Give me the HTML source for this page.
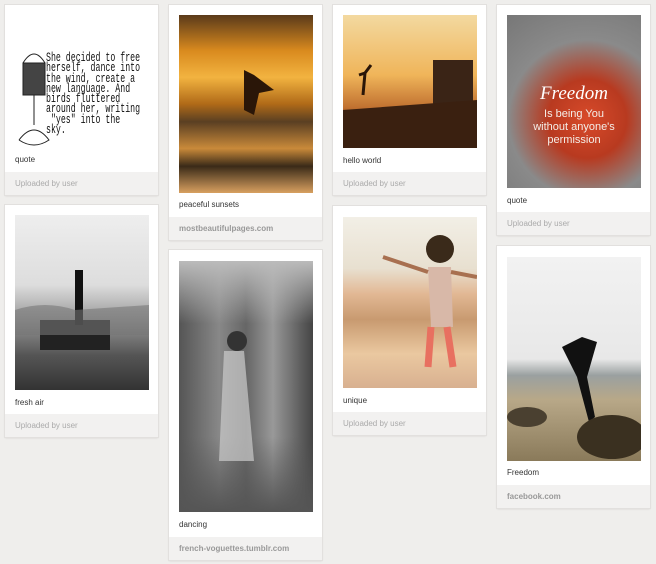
<!DOCTYPE html>
<html><head><meta charset="utf-8"><style>
body{margin:0;width:656px;height:564px;background:#efeeec;font-family:"Liberation Sans",sans-serif;position:relative;overflow:hidden}
.c{position:absolute;width:153px;background:#fff;box-shadow:0 0 0 1px #e2e0de,0 1px 2px rgba(0,0,0,.12)}
.im{position:absolute;left:10px;width:134px;overflow:hidden}
.cap{position:absolute;left:10px;font-size:8px;color:#333}
.ft{position:absolute;left:0;right:0;bottom:0;height:23px;background:#f2f1f0;font-size:8px;color:#aaa;line-height:23px;padding-left:10px}
.ft b{color:#999}
</style></head><body>

<div class="c" style="left:5px;top:5px;height:190px">
 <div class="im" style="top:10px;height:135px;background:#fff">
  <svg width="134" height="135" style="position:absolute;left:0;top:0"><g stroke="#222" fill="none"><rect x="8" y="48" width="22" height="32" fill="#444"/><path d="M8 48 Q19 30 30 48"/><path d="M19 80 L19 110 M4 125 Q19 105 34 125 Q19 135 4 125"/></g></svg>
  <div style="position:absolute;left:31px;top:38px;font-family:'Liberation Mono',monospace;font-size:12.5px;line-height:10.3px;color:#111;width:160px;transform:scaleX(0.66);transform-origin:0 0">She decided to free<br>herself, dance into<br>the wind, create a<br>new language. And<br>birds fluttered<br>around her, writing<br>&nbsp;"yes" into the<br>sky.</div>
 </div>
 <div class="cap" style="top:150px">quote</div>
 <div class="ft">Uploaded by user</div>
</div>
<div class="c" style="left:5px;top:205px;height:232px">
 <div class="im" style="top:10px;height:175px;background:linear-gradient(#eee,#ddd 40%,#999 60%,#555 80%,#333)">
  <svg width="134" height="175"><rect x="25" y="105" width="70" height="30" fill="#222"/><rect x="60" y="55" width="8" height="55" fill="#111"/><path d="M0 95 Q30 85 60 95 L134 90 L134 120 L0 120Z" fill="#777" opacity=".6"/></svg>
 </div>
 <div class="cap" style="top:193px">fresh air</div>
 <div class="ft">Uploaded by user</div>
</div>

<div class="c" style="left:169px;top:5px;height:235px">
 <div class="im" style="top:10px;height:178px;background:linear-gradient(#5a3a1a,#d98a1e 20%,#f2b340 35%,#b06a18 50%,#5a3f22 60%,#c98a3a 75%,#3a2a18 85%,#d8a060)">
  <svg width="134" height="178"><path d="M65 55 L75 60 L95 75 L80 78 L75 100 L65 95Z" fill="#2a1608"/></svg>
 </div>
 <div class="cap" style="top:195px">peaceful sunsets</div>
 <div class="ft"><b>mostbeautifulpages.com</b></div>
</div>
<div class="c" style="left:169px;top:250px;height:310px">
 <div class="im" style="top:11px;height:251px;background:linear-gradient(90deg,#555,#888 30%,#666 50%,#999 70%,#444),#666">
  <div style="position:absolute;inset:0;background:linear-gradient(#bbb,transparent 25%,transparent 70%,#555)"></div>
  <svg width="134" height="251" style="position:absolute;left:0;top:0"><path d="M45 90 L65 90 L75 200 L40 200Z" fill="#ccc" opacity=".7"/><circle cx="58" cy="80" r="10" fill="#333"/></svg>
 </div>
 <div class="cap" style="top:270px">dancing</div>
 <div class="ft"><b>french-voguettes.tumblr.com</b></div>
</div>

<div class="c" style="left:333px;top:5px;height:190px">
 <div class="im" style="top:10px;height:133px;background:linear-gradient(#f3d9a0,#f0b55a 45%,#c07030 70%,#3a2010 80%,#2a1a10)">
  <svg width="134" height="133"><rect x="90" y="45" width="40" height="60" fill="#3a2416"/><path d="M0 95 L134 85 L134 133 L0 133Z" fill="#3a2010"/><path d="M16 60 L22 58 L28 50 M22 58 L20 80" stroke="#2a1608" stroke-width="3" fill="none"/></svg>
 </div>
 <div class="cap" style="top:151px">hello world</div>
 <div class="ft">Uploaded by user</div>
</div>
<div class="c" style="left:333px;top:206px;height:229px">
 <div class="im" style="top:11px;height:171px;background:linear-gradient(#f2efe6,#e8e0d0 30%,#e2b894 45%,#c89a70 60%,#eac8a0 80%,#d8b090)">
  <svg width="134" height="171"><circle cx="97" cy="32" r="14" fill="#3a2a1a"/><path d="M85 50 L108 50 L110 110 L88 110Z" fill="#d8b8a8"/><path d="M88 110 L85 150 M104 110 L110 150" stroke="#e87060" stroke-width="7"/><path d="M85 55 L40 40 M108 55 L134 60" stroke="#a87050" stroke-width="4"/></svg>
 </div>
 <div class="cap" style="top:190px">unique</div>
 <div class="ft">Uploaded by user</div>
</div>

<div class="c" style="left:497px;top:5px;height:230px">
 <div class="im" style="top:10px;height:173px;background:radial-gradient(circle at 60% 60%,#d84a2a,#b83a20 30%,#8a8a8a 60%,#777)">
  <div style="position:absolute;left:0;right:0;top:68px;text-align:center;color:#fff;font-family:'Liberation Serif',serif;font-style:italic;font-size:19px">Freedom</div>
  <div style="position:absolute;left:0;right:0;top:93px;text-align:center;color:#f4eee8;font-size:11px;line-height:13px">Is being You<br>without anyone's<br>permission</div>
 </div>
 <div class="cap" style="top:191px">quote</div>
 <div class="ft">Uploaded by user</div>
</div>
<div class="c" style="left:497px;top:246px;height:262px">
 <div class="im" style="top:11px;height:204px;background:linear-gradient(#f2f2f2,#e8e8e8 50%,#9aa0a0 58%,#b8a888 70%,#8a7a5a 100%)">
  <svg width="134" height="204"><path d="M55 90 L75 80 L90 85 L80 120 L88 160 L82 165 L70 120Z" fill="#111"/><ellipse cx="105" cy="180" rx="35" ry="22" fill="#3a3020"/><ellipse cx="20" cy="160" rx="20" ry="10" fill="#4a4030"/></svg>
 </div>
 <div class="cap" style="top:222px">Freedom</div>
 <div class="ft"><b>facebook.com</b></div>
</div>

</body></html>
